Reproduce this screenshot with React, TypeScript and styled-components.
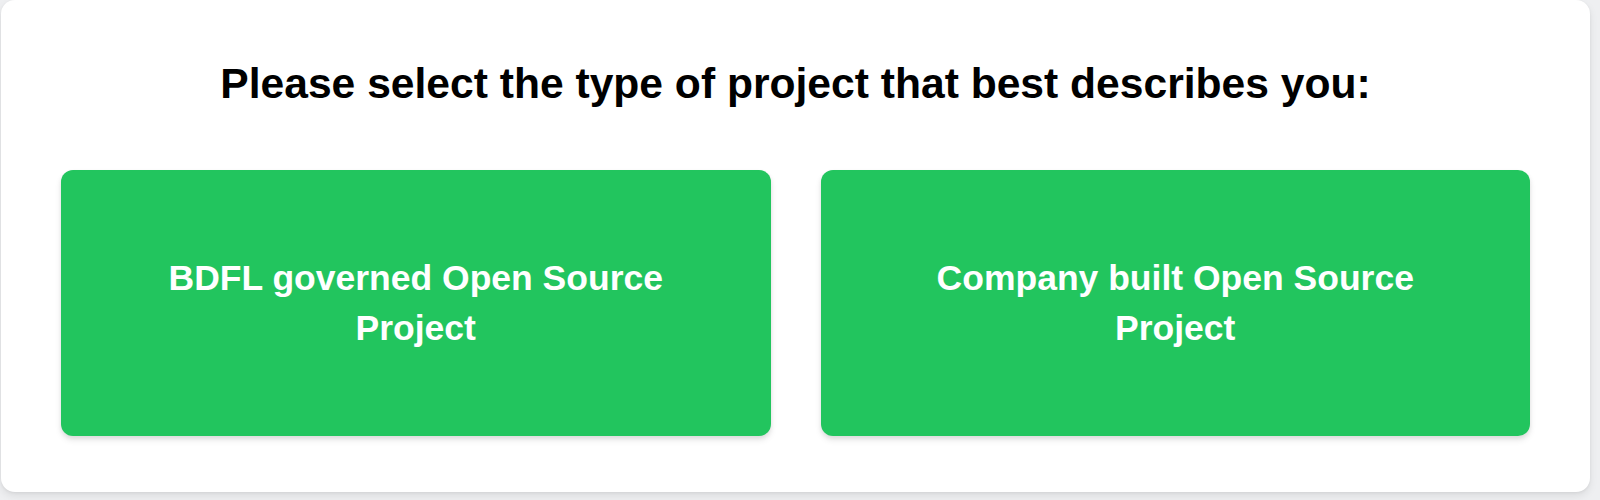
import React from "react";
import styled, { createGlobalStyle } from "styled-components";

const GlobalStyle = createGlobalStyle`
  html, body {
    margin: 0;
    padding: 0;
    background: #eeeff1;
  }
  body {
    font-family: "Liberation Sans", Arial, Helvetica, sans-serif;
  }
`;

const Page = styled.div`
  width: 1600px;
  height: 500px;
  box-sizing: border-box;
  padding: 0 10px 0 1px;
  background: #eeeff1;
`;

const Card = styled.section`
  box-sizing: border-box;
  height: 492px;
  background: #ffffff;
  border-radius: 14px;
  box-shadow: 0 4px 8px rgba(0, 0, 0, 0.08), 0 1px 3px rgba(0, 0, 0, 0.06);
  padding: 58px 60px 0;
  display: flex;
  flex-direction: column;
`;

const Heading = styled.h1`
  margin: 0 0 61px;
  font-size: 42.6px;
  line-height: 1.2;
  font-weight: 700;
  color: #000;
  text-align: center;
`;

const Options = styled.div`
  display: grid;
  grid-template-columns: 1fr 1fr;
  gap: 50px;
`;

const OptionButton = styled.button`
  height: 266px;
  border: none;
  border-radius: 12px;
  background: #22c55e;
  color: #ffffff;
  font-family: "Liberation Sans", Arial, Helvetica, sans-serif;
  font-size: 35.5px;
  font-weight: 700;
  line-height: 50px;
  padding: 0 80px;
  text-align: center;
  cursor: pointer;
  box-shadow: 0 4px 6px rgba(0, 0, 0, 0.1), 0 2px 4px rgba(0, 0, 0, 0.06);
`;

const options = [
  "BDFL governed Open Source Project",
  "Company built Open Source Project",
];

export default function App() {
  return (
    <>
      <GlobalStyle />
      <Page>
        <Card>
          <Heading>Please select the type of project that best describes you:</Heading>
          <Options>
            {options.map((o) => (
              <OptionButton key={o}>{o}</OptionButton>
            ))}
          </Options>
        </Card>
      </Page>
    </>
  );
}
